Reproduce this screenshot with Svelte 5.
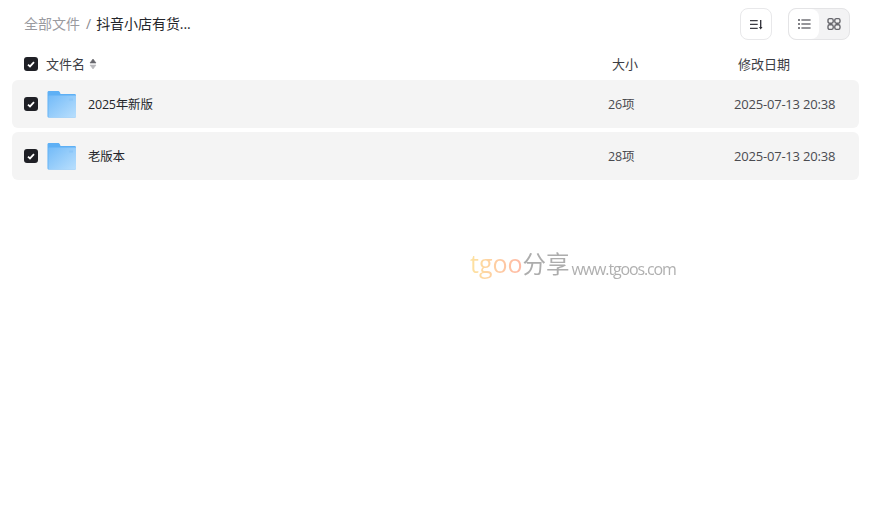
<script>
  const rows = [
    { name: '2025年新版', size: '26项', date: '2025-07-13 20:38' },
    { name: '老版本', size: '28项', date: '2025-07-13 20:38' }
  ];
</script>

<div class="page">
  <div class="toolbar">
    <div class="crumbs">
      <span class="root">全部文件</span>
      <span class="sep">/</span>
      <span class="current">抖音小店有货...</span>
    </div>
    <div class="actions">
      <button class="sort-btn" type="button" aria-label="排序">
        <svg width="14" height="14" viewBox="0 0 14 14" fill="none">
          <path d="M1 3.7H8.7M1 7.3H8.7M1 11.3H8.7" stroke="#3c3c44" stroke-width="1.2"/>
          <path d="M11.7 3V11" stroke="#2c2c34" stroke-width="1.3"/>
          <path d="M9.9 10L11.7 12.6L13.5 10Z" fill="#2c2c34"/>
        </svg>
      </button>
      <div class="view-switch">
        <button class="view active" type="button" aria-label="列表">
          <svg width="14" height="14" viewBox="0 0 14 14" fill="none">
            <path d="M1.2 3H2.8M1.2 7H2.8M1.2 11H2.8" stroke="#2c2c34" stroke-width="1.4"/>
            <path d="M4.4 3H13.6M4.4 7H13.6M4.4 11H13.6" stroke="#2c2c34" stroke-width="1.2"/>
          </svg>
        </button>
        <button class="view" type="button" aria-label="宫格">
          <svg width="14" height="14" viewBox="0 0 14 14" fill="none" stroke="#66666c" stroke-width="1.4">
            <rect x="1" y="1.6" width="5.2" height="4.6" rx="1.6"/>
            <rect x="7.8" y="1.6" width="5.2" height="4.6" rx="1.6"/>
            <rect x="1" y="7.8" width="5.2" height="4.6" rx="1.6"/>
            <rect x="7.8" y="7.8" width="5.2" height="4.6" rx="1.6"/>
          </svg>
        </button>
      </div>
    </div>
  </div>

  <div class="head">
    <span class="check">
      <svg width="8" height="7" viewBox="0 0 8 7" fill="none"><path d="M1 3.6L3 5.4L7 1.2" stroke="#fff" stroke-width="1.8"/></svg>
    </span>
    <span class="col-name">文件名
      <svg class="sorter" width="8" height="12" viewBox="0 0 8 12">
        <path d="M4 1L7 5H1Z" fill="#66666c" stroke="#66666c" stroke-width="0.6" stroke-linejoin="round"/>
        <path d="M4 11L1 7H7Z" fill="#b8b8bc" stroke="#b8b8bc" stroke-width="0.6" stroke-linejoin="round"/>
      </svg>
    </span>
    <span class="col-size">大小</span>
    <span class="col-date">修改日期</span>
  </div>

  <div class="list">
    {#each rows as row}
      <div class="row">
        <span class="check">
          <svg width="8" height="7" viewBox="0 0 8 7" fill="none"><path d="M1 3.6L3 5.4L7 1.2" stroke="#fff" stroke-width="1.8"/></svg>
        </span>
        <svg class="folder" width="30" height="28" viewBox="0 0 30 28">
          <defs>
            <linearGradient id="folder-front" x1="0" y1="0" x2="1" y2="1">
              <stop offset="0" stop-color="#74bbf8"/>
              <stop offset="1" stop-color="#b9dffd"/>
            </linearGradient>
          </defs>
          <path d="M0.5 2.5C0.5 1.5 1 1 2 1H11C12 1 12.5 1.5 13 2.5L13.5 4H27.5C28.5 4 29 4.5 29 5.5V26C29 27 28.5 27.5 27.5 27.5H2C1 27.5 0.5 27 0.5 26Z" fill="#5eb0f5"/>
          <path d="M1.4 6.4C1.4 5.9 1.7 5.6 2.2 5.6H29V26C29 27 28.5 27.5 27.5 27.5H2.6C1.9 27.5 1.4 27 1.4 26Z" fill="url(#folder-front)"/>
          <rect x="22" y="8.5" width="4" height="2" fill="#8cc6f8"/>
        </svg>
        <span class="name">{row.name}</span>
        <span class="size">{row.size}</span>
        <span class="date">{row.date}</span>
      </div>
    {/each}
  </div>

  <div class="watermark">
    <span class="brand">tgoo</span><span class="cn">分享</span><span class="url">www.tgoos.com</span>
  </div>
</div>

<style>
  :global(body) {
    margin: 0;
    background: #fff;
  }

  .page {
    position: relative;
    width: 874px;
    height: 514px;
    overflow: hidden;
    font-family: "Open Sans", "Noto Sans CJK SC", sans-serif;
    font-size: 13px;
    color: #25262b;
  }

  .toolbar {
    display: flex;
    justify-content: space-between;
    align-items: center;
    height: 48px;
    padding: 0 24px;
  }

  .crumbs {
    display: flex;
    align-items: center;
    margin-top: -2px;
    font-size: 14px;
  }

  .root {
    color: #9a9a9f;
  }

  .sep {
    margin: 0 5px 0 6px;
    color: #8a8a90;
  }

  .current {
    color: #25262b;
    letter-spacing: -0.05px;
  }

  .actions {
    display: flex;
    gap: 16px;
  }

  button {
    display: flex;
    align-items: center;
    justify-content: center;
    box-sizing: border-box;
    padding: 0;
    border: none;
    background: none;
  }

  .sort-btn {
    width: 32px;
    height: 32px;
    border: 1px solid #e8e8ea;
    border-radius: 8px;
    background: #fff;
  }

  .view-switch {
    display: flex;
    box-sizing: border-box;
    width: 62px;
    height: 32px;
    border: 1px solid #e4e4e6;
    border-radius: 8px;
    background: #f3f3f4;
    overflow: hidden;
  }

  .view {
    flex: 1;
  }

  .view.active {
    background: #fff;
    border-radius: 8px;
  }

  .head {
    display: flex;
    align-items: center;
    height: 32px;
    padding: 0 24px;
    color: #3c3d44;
  }

  .col-name,
  .col-size,
  .col-date {
    position: relative;
    top: -1px;
  }

  .sorter {
    position: relative;
    top: 1px;
  }

  .check {
    display: flex;
    align-items: center;
    justify-content: center;
    flex: none;
    width: 14px;
    height: 14px;
    border-radius: 3px;
    background: #1f2026;
  }

  .col-name {
    display: flex;
    align-items: center;
    gap: 4px;
    margin-left: 8px;
    width: 566px;
  }

  .col-size {
    width: 126px;
  }

  .list {
    display: flex;
    flex-direction: column;
    gap: 4px;
    margin: 0 15px 0 12px;
  }

  .row {
    display: flex;
    align-items: center;
    height: 48px;
    padding-left: 12px;
    border-radius: 6px;
    background: #f4f4f4;
    letter-spacing: -0.2px;
  }

  .folder {
    flex: none;
    margin-left: 9px;
  }

  .name {
    width: 520px;
    margin-left: 11px;
    padding-top: 2px;
    font-size: 12.5px;
    line-height: 16px;
  }

  .size {
    width: 126px;
    padding-top: 2px;
    font-size: 12.5px;
    line-height: 16px;
    color: #4a4b50;
  }

  .date {
    color: #4a4b50;
  }

  .watermark {
    position: absolute;
    left: 470px;
    top: 246px;
    display: flex;
    align-items: baseline;
    white-space: nowrap;
    filter: blur(0.35px);
  }

  .brand {
    font-size: 25px;
    background: linear-gradient(90deg, #fde2a0, #ffb8a4);
    -webkit-background-clip: text;
    background-clip: text;
    color: transparent;
  }

  .cn {
    font-size: 23.5px;
    color: #adadad;
  }

  .url {
    position: relative;
    top: 2px;
    margin-left: 2px;
    font-size: 16px;
    letter-spacing: -1.15px;
    color: #b0b0b0;
  }
</style>
